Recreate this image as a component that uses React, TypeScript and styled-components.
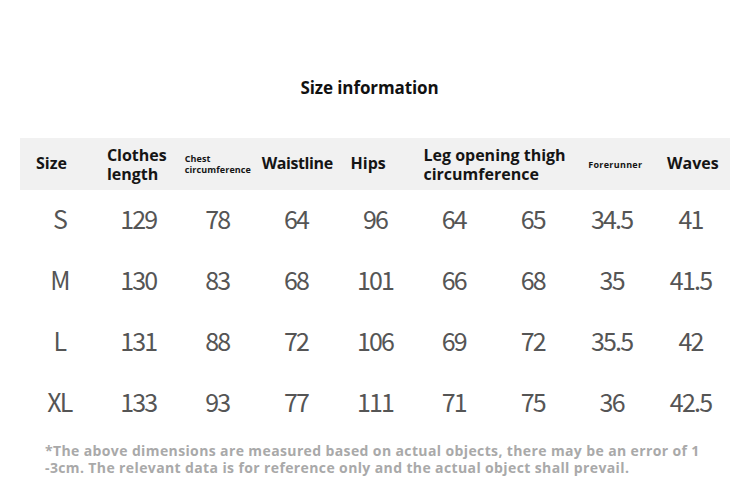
import React from "react";
import styled, { createGlobalStyle } from "styled-components";

const Global = createGlobalStyle`
  html, body { margin: 0; padding: 0; background: #ffffff; }
  body { font-family: "Open Sans", "Noto Sans", sans-serif; }
`;

const Page = styled.div`
  width: 750px;
  height: 490px;
  display: flex;
  flex-direction: column;
  overflow: hidden;
`;

const Title = styled.h1`
  margin: 78px 0 0;
  padding-right: 11px;
  text-align: center;
  font-family: "Open Sans", sans-serif;
  font-weight: 700;
  font-size: 17px;
  line-height: 20px;
  letter-spacing: -0.1px;
  color: #111;
`;

const Table = styled.div`
  margin: 40px 20px 0;
  display: flex;
  flex-direction: column;
`;

const HeaderRow = styled.div`
  display: grid;
  grid-template-columns: repeat(9, 1fr);
  height: 52px;
  background: #f1f1f1;
  align-items: center;
`;

const HeadCell = styled.div<{
  $pad: number;
  $span?: number;
  $small?: boolean;
  $spaced?: boolean;
  $dy?: number;
  $tight?: boolean;
}>`
  grid-column: span ${(p) => p.$span ?? 1};
  padding-left: ${(p) => p.$pad}px;
  margin-top: ${(p) => (p.$dy ?? 0) * 2}px;
  font-family: "Open Sans", sans-serif;
  font-weight: 700;
  font-size: ${(p) => (p.$small ? "9px" : "16px")};
  line-height: ${(p) => (p.$small ? "11px" : "19px")};
  letter-spacing: ${(p) =>
    p.$spaced ? "0.3px" : p.$small ? "0.1px" : p.$tight ? "-0.4px" : "0px"};
  color: #151515;
  white-space: nowrap;
`;

const DataRow = styled.div`
  display: grid;
  grid-template-columns: repeat(9, 1fr);
  height: 61px;
  align-items: center;
`;

const DataCell = styled.div`
  padding-bottom: 5px;
  text-align: center;
  font-family: "Noto Sans CJK SC", "Noto Sans", sans-serif;
  font-weight: 400;
  font-size: 25px;
  letter-spacing: -1.8px;
  color: #555;
`;

const Note = styled.div`
  margin-top: 8px;
  padding-left: 45px;
  font-family: "Open Sans", sans-serif;
  font-weight: 700;
  font-size: 14px;
  line-height: 17px;
  letter-spacing: 0.38px;
  color: #a9a9a9;
`;

const NoteLine = styled.div`
  white-space: nowrap;
`;

const rows = [
  ["S", "129", "78", "64", "96", "64", "65", "34.5", "41"],
  ["M", "130", "83", "68", "101", "66", "68", "35", "41.5"],
  ["L", "131", "88", "72", "106", "69", "72", "35.5", "42"],
  ["XL", "133", "93", "77", "111", "71", "75", "36", "42.5"],
];

export default function App() {
  return (
    <Page>
      <Global />
      <Title>Size information</Title>
      <Table>
        <HeaderRow>
          <HeadCell $pad={16} $dy={-1}>Size</HeadCell>
          <HeadCell $pad={8} $dy={1}>
            Clothes
            <br />
            length
          </HeadCell>
          <HeadCell $pad={7} $small>
            Chest
            <br />
            circumference
          </HeadCell>
          <HeadCell $pad={5} $dy={-1} $tight>
            Waistline
          </HeadCell>
          <HeadCell $pad={15} $dy={-1}>Hips</HeadCell>
          <HeadCell $pad={9} $span={2} $dy={1}>
            Leg opening thigh
            <br />
            circumference
          </HeadCell>
          <HeadCell $pad={16} $small $spaced>
            Forerunner
          </HeadCell>
          <HeadCell $pad={16} $dy={-1}>Waves</HeadCell>
        </HeaderRow>
        {rows.map((r) => (
          <DataRow key={r[0]}>
            {r.map((v, i) => (
              <DataCell key={i}>{v}</DataCell>
            ))}
          </DataRow>
        ))}
      </Table>
      <Note>
        <NoteLine>
          *The above dimensions are measured based on actual objects, there may be an error of 1
        </NoteLine>
        <NoteLine>-3cm. The relevant data is for reference only and the actual object shall prevail.</NoteLine>
      </Note>
    </Page>
  );
}
